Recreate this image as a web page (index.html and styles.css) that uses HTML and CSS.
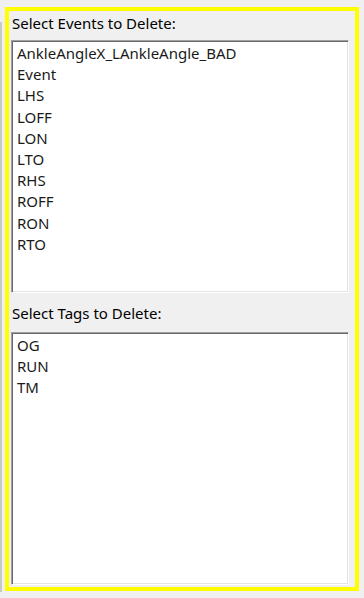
FILE: index.html
```html
<!DOCTYPE html>
<html lang="en">
<head>
    <meta charset="UTF-8">
    <meta name="viewport" content="width=device-width, initial-scale=1.0">
    <title>Delete Events and Tags</title>
    <link rel="stylesheet" href="styles.css">
</head>
<body>
    <div class="edge"></div>
    <div class="panel">
        <div class="group">
            <div class="group-label">Select Events to Delete:</div>
            <ul class="listbox">
                <li>AnkleAngleX_LAnkleAngle_BAD</li>
                <li>Event</li>
                <li>LHS</li>
                <li>LOFF</li>
                <li>LON</li>
                <li>LTO</li>
                <li>RHS</li>
                <li>ROFF</li>
                <li>RON</li>
                <li>RTO</li>
            </ul>
        </div>
        <div class="group group-tags">
            <div class="group-label">Select Tags to Delete:</div>
            <ul class="listbox">
                <li>OG</li>
                <li>RUN</li>
                <li>TM</li>
            </ul>
        </div>
    </div>
</body>
</html>
```

FILE: styles.css
```css
body {
    margin: 0;
    background: #f0f0f0;
    font-family: "Noto Sans", "Open Sans", sans-serif;
    font-size: 15px;
    color: #000;
    position: relative;
    height: 598px;
    overflow: hidden;
}

.edge {
    position: absolute;
    left: 0;
    top: 22px;
    width: 2px;
    height: 570px;
    background: #c8c8c8;
}

.panel {
    margin: 7px 5px 0 5px;
    border: 4px solid #ffff00;
    height: 576px;
    padding: 0 6px 0 2px;
    display: flex;
    flex-direction: column;
}

.group {
    display: flex;
    flex-direction: column;
}

.group-label {
    height: 29px;
    line-height: 24px;
    padding-left: 1px;
}

.group-tags .group-label {
    height: 39px;
    line-height: 40px;
}

.listbox {
    list-style: none;
    margin: 0;
    padding: 2px 0 0 5px;
    height: 253px;
    box-sizing: border-box;
    background: #fff;
    border-top: 1px solid #a0a0a0;
    border-left: 1px solid #a0a0a0;
    border-right: 1px solid #fff;
    border-bottom: 1px solid #fff;
    box-shadow: inset 1px 1px 0 #696969, inset -1px -1px 0 #e3e3e3;
}

.listbox li {
    line-height: 21.2px;
    color: #1a1a1a;
}
```
